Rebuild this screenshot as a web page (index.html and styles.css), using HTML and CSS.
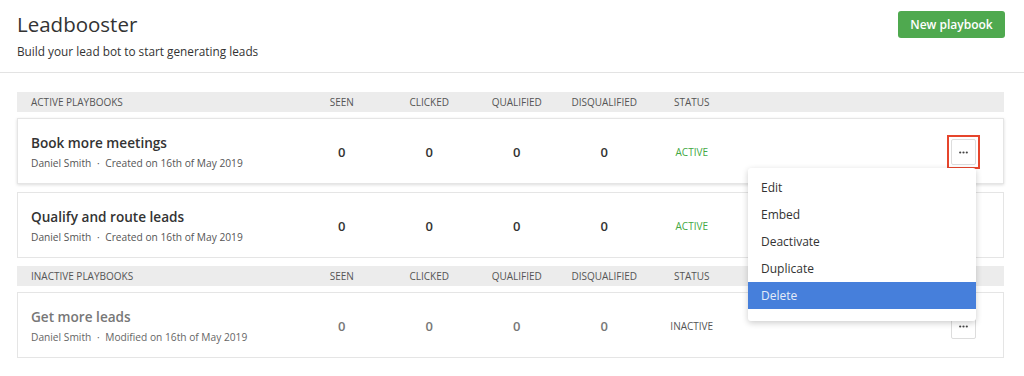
FILE: index.html
```html
<!DOCTYPE html>
<html lang="en">
<head>
    <meta charset="UTF-8">
    <meta name="viewport" content="width=device-width, initial-scale=1.0">
    <title>Leadbooster</title>
    <link rel="stylesheet" href="styles.css">
</head>
<body>

<header class="page-header">
    <div class="page-title">
        <h1>Leadbooster</h1>
        <p>Build your lead bot to start generating leads</p>
    </div>
    <button class="btn-new">New playbook</button>
</header>

<main class="playbooks">
    <div class="table-head">
        <span class="col-name">Active playbooks</span>
        <span class="col">Seen</span>
        <span class="col">Clicked</span>
        <span class="col">Qualified</span>
        <span class="col">Disqualified</span>
        <span class="col">Status</span>
    </div>

    <div class="playbook playbook-hover">
        <div class="col-name">
            <h3>Book more meetings</h3>
            <p>Daniel Smith <span class="dot">·</span> Created on 16th of May 2019</p>
        </div>
        <span class="col num">0</span>
        <span class="col num">0</span>
        <span class="col num">0</span>
        <span class="col num">0</span>
        <span class="col status active">Active</span>
        <div class="actions">
            <span class="focus-ring">
                <button class="btn-more">
                    <svg width="9" height="3" viewBox="0 0 9 3"><circle cx="1.2" cy="1.5" r="1.1"/><circle cx="4.5" cy="1.5" r="1.1"/><circle cx="7.8" cy="1.5" r="1.1"/></svg>
                </button>
            </span>
            <ul class="dropdown">
                <li>Edit</li>
                <li>Embed</li>
                <li>Deactivate</li>
                <li>Duplicate</li>
                <li class="selected">Delete</li>
            </ul>
        </div>
    </div>

    <div class="playbook">
        <div class="col-name">
            <h3>Qualify and route leads</h3>
            <p>Daniel Smith <span class="dot">·</span> Created on 16th of May 2019</p>
        </div>
        <span class="col num">0</span>
        <span class="col num">0</span>
        <span class="col num">0</span>
        <span class="col num">0</span>
        <span class="col status active">Active</span>
        <div class="actions">
            <button class="btn-more">
                <svg width="9" height="3" viewBox="0 0 9 3"><circle cx="1.2" cy="1.5" r="1.1"/><circle cx="4.5" cy="1.5" r="1.1"/><circle cx="7.8" cy="1.5" r="1.1"/></svg>
            </button>
        </div>
    </div>

    <div class="table-head">
        <span class="col-name">Inactive playbooks</span>
        <span class="col">Seen</span>
        <span class="col">Clicked</span>
        <span class="col">Qualified</span>
        <span class="col">Disqualified</span>
        <span class="col">Status</span>
    </div>

    <div class="playbook inactive">
        <div class="col-name">
            <h3>Get more leads</h3>
            <p>Daniel Smith <span class="dot">·</span> Modified on 16th of May 2019</p>
        </div>
        <span class="col num">0</span>
        <span class="col num">0</span>
        <span class="col num">0</span>
        <span class="col num">0</span>
        <span class="col status">Inactive</span>
        <div class="actions">
            <button class="btn-more">
                <svg width="9" height="3" viewBox="0 0 9 3"><circle cx="1.2" cy="1.5" r="1.1"/><circle cx="4.5" cy="1.5" r="1.1"/><circle cx="7.8" cy="1.5" r="1.1"/></svg>
            </button>
        </div>
    </div>
</main>

</body>
</html>
```

FILE: styles.css
```css
/* Base */
body {
    font-family: "Open Sans", "Noto Sans", Arial, sans-serif;
    color: #333;
    background-color: #fff;
    margin: 0;
    padding: 0;
}

/* Page header */
.page-header {
    display: flex;
    justify-content: space-between;
    align-items: flex-start;
    height: 73px;
    box-sizing: border-box;
    padding: 11px 19px 0 17px;
    border-bottom: 1px solid #e3e3e3;
}

.page-title h1 {
    margin: 0;
    font-size: 20.5px;
    font-weight: 400;
    line-height: 26px;
    color: #333;
}

.page-title p {
    margin: 6px 0 0;
    font-size: 11.8px;
    line-height: 16px;
    color: #333;
}

.btn-new {
    width: 107px;
    height: 27px;
    background-color: #4fa94f;
    color: white;
    font-family: inherit;
    font-size: 12px;
    font-weight: 600;
    border: none;
    border-radius: 3px;
    cursor: pointer;
}

/* Playbook list */
.playbooks {
    padding: 19px 20px 17px 17px;
}

.table-head,
.playbook {
    display: grid;
    grid-template-columns: 267px repeat(5, 87.5px) 1fr auto;
    align-items: center;
    padding: 0 27px 0 13px;
    border: 1px solid transparent;
}

.table-head {
    height: 20px;
    box-sizing: border-box;
    background-color: #ececec;
    border-color: #ececec;
    font-size: 10px;
    text-transform: uppercase;
    color: #555;
    margin-bottom: 6px;
}

.col {
    text-align: center;
}

.playbook {
    height: 66px;
    box-sizing: border-box;
    padding-top: 2px;
    background-color: white;
    border-color: #e5e5e5;
    margin-bottom: 8px;
    position: relative;
}

.playbook-hover {
    box-shadow: 0 1px 3px rgba(0, 0, 0, 0.14);
    z-index: 2;
}

.playbook h3 {
    margin: 0;
    font-size: 13.6px;
    font-weight: 600;
    line-height: 19px;
    color: #333;
}

.playbook p {
    margin: 4px 0 0;
    font-size: 10.2px;
    line-height: 15px;
    color: #555;
}

.playbook .dot {
    margin: 0 3px;
}

.num {
    font-size: 13px;
    font-weight: 600;
    color: #333;
}

.status {
    font-size: 10px;
    text-transform: uppercase;
    color: #555;
}

.status.active {
    color: #43a843;
}

/* Inactive rows are greyed out */
.inactive h3,
.inactive .num {
    color: #777;
}

.inactive p {
    color: #666;
}

/* Row actions */
.actions {
    grid-column: 8;
    position: relative;
}

.btn-more {
    display: flex;
    align-items: center;
    justify-content: center;
    width: 25px;
    height: 26px;
    padding: 0;
    background-color: white;
    border: 1px solid #ddd;
    border-radius: 2px;
    cursor: pointer;
    fill: #444;
}

.focus-ring {
    display: block;
    position: relative;
}

.focus-ring::after {
    content: "";
    position: absolute;
    top: -4px;
    left: -4px;
    right: -4px;
    bottom: -4px;
    border: 2px solid #e6452c;
}

.dropdown {
    position: absolute;
    top: 29px;
    right: 0;
    width: 228px;
    margin: 0;
    padding: 6px 0 12px;
    list-style: none;
    background-color: white;
    border-radius: 3px;
    box-shadow: 0 2px 6px rgba(0, 0, 0, 0.2);
    z-index: 10;
}

.dropdown li {
    height: 27px;
    line-height: 27px;
    padding: 0 13px;
    font-size: 12px;
    color: #333;
}

.dropdown li.selected {
    background-color: #467fdb;
    color: #e4ecf8;
}
```
